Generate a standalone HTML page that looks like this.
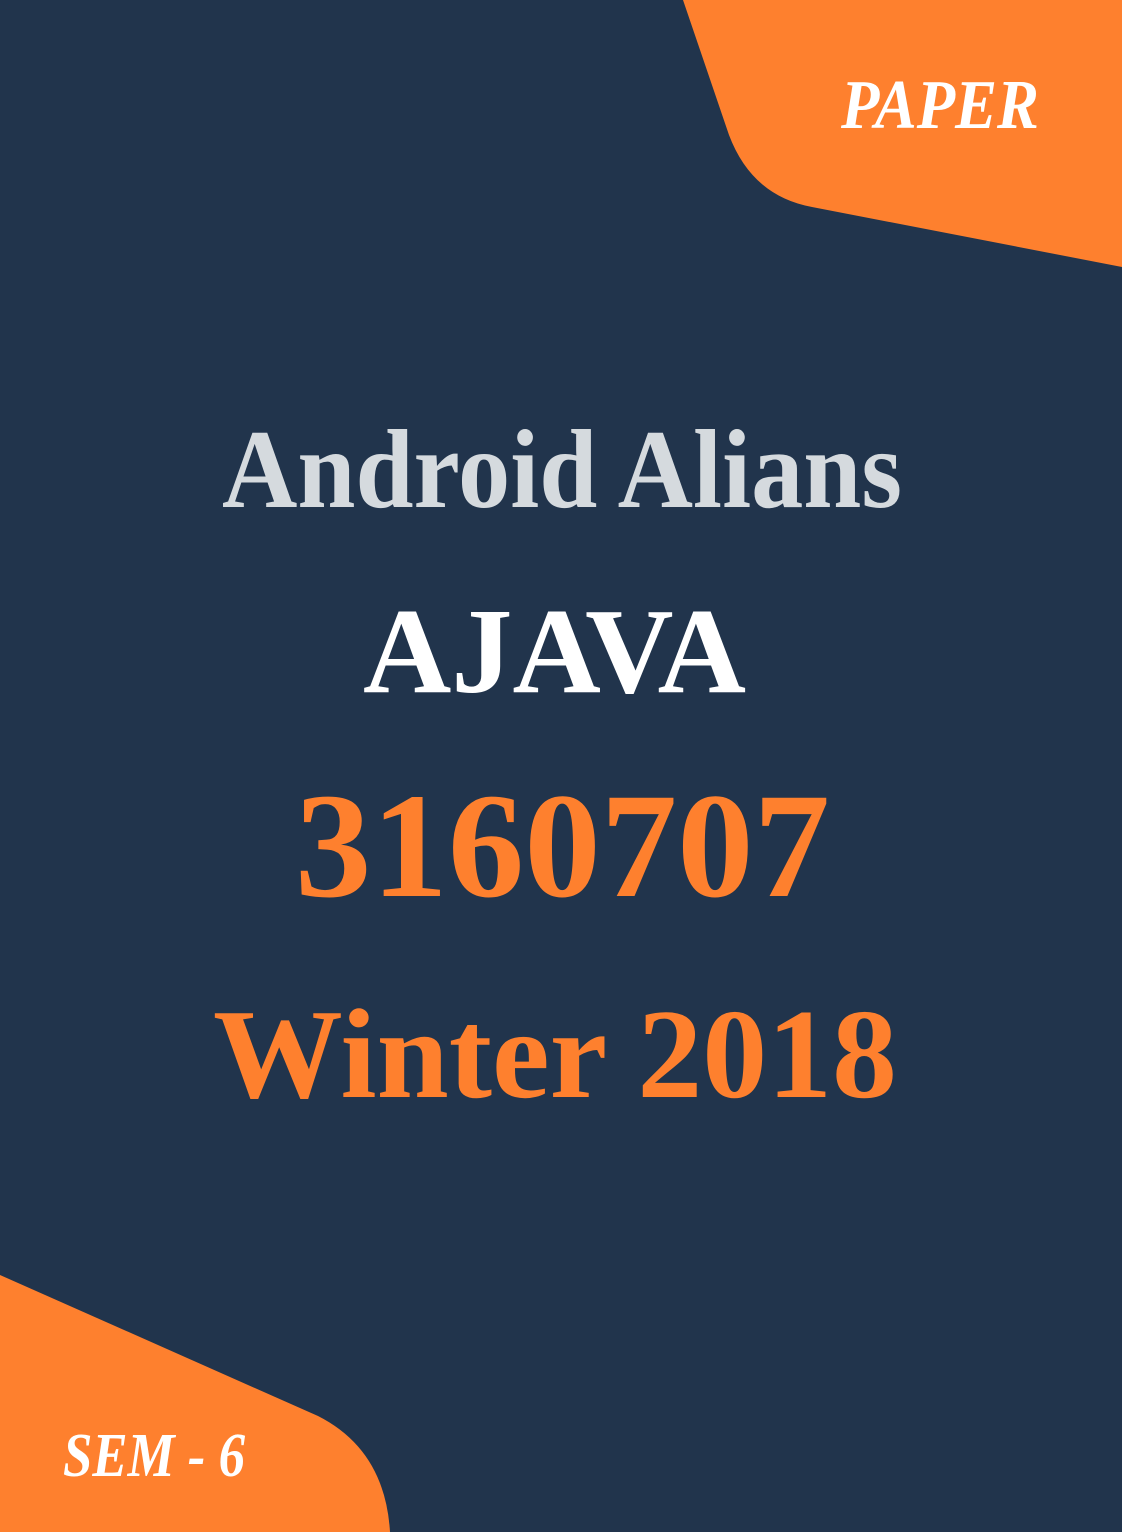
<!DOCTYPE html>
<html><head><meta charset="utf-8"><style>
html,body{margin:0;padding:0;background:#21344c;}
svg{display:block}
</style></head><body>
<svg width="1122" height="1532" viewBox="0 0 1122 1532" xmlns="http://www.w3.org/2000/svg">
<rect width="1122" height="1532" fill="#21344c"/>
<path d="M683 0 L1122 0 L1122 267 L812 207 Q752 196 729 135 Z" fill="#fe802e"/>
<path d="M0 1275 L318 1416 Q385 1450 390 1532 L0 1532 Z" fill="#fe802e"/>
<g font-family="'Liberation Serif', serif">
<text x="841" y="128" font-size="70" font-style="italic" font-weight="bold" fill="#fff" textLength="198" lengthAdjust="spacingAndGlyphs">PAPER</text>
<text x="222" y="507" font-size="112" font-weight="bold" fill="#d5dade" textLength="680" lengthAdjust="spacingAndGlyphs">Android Alians</text>
<text x="363" y="692" font-size="122" font-weight="bold" fill="#fff" textLength="383" lengthAdjust="spacingAndGlyphs">AJAVA</text>
<text x="295" y="896" font-size="150" font-weight="bold" fill="#fe802e" textLength="535" lengthAdjust="spacingAndGlyphs">3160707</text>
<text x="213" y="1097" font-size="128" font-weight="bold" fill="#fe802e" textLength="684" lengthAdjust="spacingAndGlyphs">Winter 2018</text>
<text x="63" y="1476" font-size="62" font-style="italic" font-weight="bold" fill="#fff" textLength="182" lengthAdjust="spacingAndGlyphs">SEM - 6</text>
</g>
</svg>
</body></html>
